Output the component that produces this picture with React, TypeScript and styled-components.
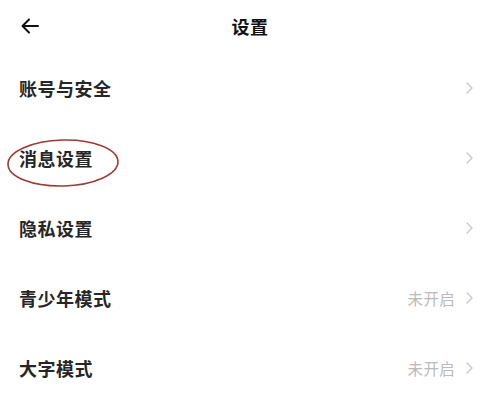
import styled, { createGlobalStyle } from "styled-components";

const GlobalStyle = createGlobalStyle`
  html, body {
    margin: 0;
    padding: 0;
    background: #ffffff;
  }
  body {
    font-family: "Noto Sans CJK SC", "Noto Sans", sans-serif;
    color: #222222;
  }
`;

type Item = {
  label: string;
  value?: string;
  marked?: boolean;
};

const items: Item[] = [
  { label: "账号与安全" },
  { label: "消息设置", marked: true },
  { label: "隐私设置" },
  { label: "青少年模式", value: "未开启" },
  { label: "大字模式", value: "未开启" },
];

const App = () => {
  return (
    <Page>
      <GlobalStyle />
      <Header>
        <BackButton aria-label="返回">
          <svg width="18" height="16" viewBox="0 0 18 16" fill="none">
            <path
              d="M17 8H2M8 1.5L1.5 8L8 14.5"
              stroke="#111"
              strokeWidth="2"
              strokeLinecap="round"
              strokeLinejoin="round"
            />
          </svg>
        </BackButton>
        <Title>设置</Title>
      </Header>
      <List>
        {items.map((item) => (
          <Row key={item.label}>
            <Label>
              {item.label}
              {item.marked && (
                <Circle viewBox="0 0 114 50" fill="none">
                  <ellipse
                    cx="57"
                    cy="25"
                    rx="55"
                    ry="23"
                    stroke="#9e3a34"
                    strokeWidth="1.6"
                    transform="rotate(-1.5 57 25)"
                  />
                </Circle>
              )}
            </Label>
            <Trail>
              {item.value && <Value>{item.value}</Value>}
              <svg width="7" height="12" viewBox="0 0 7 12" fill="none">
                <path
                  d="M1 1L6 6L1 11"
                  stroke="#c8c8c8"
                  strokeWidth="1.4"
                  strokeLinecap="round"
                  strokeLinejoin="round"
                />
              </svg>
            </Trail>
          </Row>
        ))}
      </List>
    </Page>
  );
};

const Page = styled.div`
  width: 500px;
  height: 411px;
  overflow: hidden;
  background: #ffffff;
`;

const Header = styled.header`
  position: relative;
  height: 53px;
  display: flex;
  align-items: center;
  justify-content: center;
  padding-bottom: 2px;
  box-sizing: border-box;
`;

const BackButton = styled.button`
  position: absolute;
  left: 21px;
  top: 18px;
  border: none;
  background: none;
  padding: 0;
  display: flex;
  cursor: pointer;
`;

const Title = styled.h1`
  margin: 0;
  font-size: 18px;
  font-weight: 700;
  color: #111111;
  letter-spacing: 0.5px;
`;

const List = styled.ul`
  list-style: none;
  margin: 0;
  padding: 0;
`;

const Row = styled.li`
  height: 70px;
  display: flex;
  align-items: center;
  justify-content: space-between;
  padding: 0 27px 0 19px;
`;

const Label = styled.span`
  position: relative;
  font-size: 18px;
  font-weight: 700;
  color: #262626;
  letter-spacing: 0.5px;
`;

const Circle = styled.svg`
  position: absolute;
  left: -13px;
  top: -7px;
  width: 114px;
  height: 50px;
  pointer-events: none;
`;

const Trail = styled.span`
  display: flex;
  align-items: center;
  gap: 11px;
`;

const Value = styled.span`
  font-size: 15.5px;
  color: #bbbbbb;
  letter-spacing: 0.3px;
`;

export default App;
